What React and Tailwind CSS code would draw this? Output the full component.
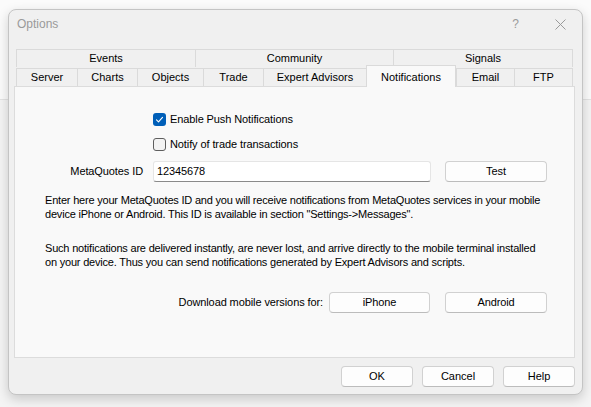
import React from 'react';

const font = { fontFamily: '"Liberation Sans", Arial, sans-serif' };

const Button = ({ children, className = '' }) => (
  <div
    className={`flex items-center justify-center h-[21px] rounded-[4px] border border-[#d1d1d1] border-b-[#bcbcbc] bg-[#fdfdfd] text-[11px] text-black ${className}`}
  >
    {children}
  </div>
);

const Checkbox = ({ checked, label }) => (
  <div className="flex items-center gap-[4px] h-[13px]">
    {checked ? (
      <div className="w-[13px] h-[13px] rounded-[3px] bg-[#005fb8] flex items-center justify-center">
        <svg width="9" height="9" viewBox="0 0 9 9" fill="none">
          <path d="M1.5 4.8 L3.5 6.8 L7.5 2.3" stroke="white" strokeWidth="1.1" strokeLinecap="round" strokeLinejoin="round" />
        </svg>
      </div>
    ) : (
      <div className="w-[13px] h-[13px] rounded-[3px] border border-[#5e5e5e] bg-[#f3f3f3]" />
    )}
    <span className="text-[11px] text-black">{label}</span>
  </div>
);

const topTabs = [
  { label: 'Events', w: 'w-[179px]' },
  { label: 'Community', w: 'w-[198px]' },
  { label: 'Signals', w: 'w-[180px]' },
];

const tabs = [
  { label: 'Server', w: 'w-[61px]' },
  { label: 'Charts', w: 'w-[60px]' },
  { label: 'Objects', w: 'w-[66px]' },
  { label: 'Trade', w: 'w-[60px]' },
  { label: 'Expert Advisors', w: 'w-[103px]' },
  { label: 'Notifications', w: 'w-[90px]', active: true },
  { label: 'Email', w: 'w-[58px]' },
  { label: 'FTP', w: 'w-[59px]' },
];

export default function App() {
  return (
    <div className="relative w-[591px] h-[407px] bg-white overflow-hidden" style={font}>
      {/* window behind */}
      <div className="h-[100px] border-b border-[#e3e3e3] bg-[#fbfbfb]" />
      <div className="h-[307px] bg-[#f4f4f4]" />

      {/* dialog */}
      <div className="absolute left-[8px] top-[9px] w-[575px] h-[386px] rounded-[8px] border border-[#c4c4c4] bg-[#f0f0f0] shadow-[0_4px_12px_rgba(0,0,0,0.18)] flex flex-col">
        <div className="h-[39px] flex items-start justify-between pl-[8px] pr-[16px] pt-[6px]">
          <span className="text-[12px] leading-[16px] text-[#9a9a9a]">Options</span>
          <div className="flex items-center gap-[36px] h-[16px]">
            <span className="text-[12px] leading-[16px] text-[#9a9a9a]">?</span>
            <svg width="11" height="11" viewBox="0 0 11 11">
              <path d="M0.5 0.5 L10.5 10.5 M10.5 0.5 L0.5 10.5" stroke="#9a9a9a" strokeWidth="1" />
            </svg>
          </div>
        </div>

        <div className="pl-[5px] pr-[7px]">
          <div className="flex ml-[2px]">
            {topTabs.map((t) => (
              <div
                key={t.label}
                className={`${t.w} h-[18px] flex items-center justify-center border border-r-0 last:border-r border-b-0 border-[#dadada] text-[11px] text-black`}
              >
                {t.label}
              </div>
            ))}
          </div>
          <div className="flex ml-[2px] items-end h-[19px] relative z-10">
            {tabs.map((t) =>
              t.active ? (
                <div
                  key={t.label}
                  className={`${t.w} h-[22px] -mt-[3px] mb-[-1px] flex items-start pt-[3px] justify-center border border-b-0 border-[#dadada] bg-[#f9f9f9] text-[11px] text-black`}
                >
                  {t.label}
                </div>
              ) : (
                <div
                  key={t.label}
                  className={`${t.w} h-[18px] flex items-center justify-center border-t border-l last:border-r border-[#dadada] text-[11px] text-black`}
                >
                  {t.label}
                </div>
              )
            )}
          </div>

          <div className="h-[272px] bg-[#f9f9f9] border border-[#dcdcdc] text-[11px] text-black tracking-[-0.1px]">
            <div className="pl-[138px] pt-[26px] flex flex-col gap-[12px]">
              <Checkbox checked label="Enable Push Notifications" />
              <Checkbox label="Notify of trade transactions" />
            </div>

            <div className="flex items-center mt-[10px]">
              <div className="w-[130px] text-right pr-[2px]">MetaQuotes ID</div>
              <div className="ml-[8px] w-[278px] h-[21px] bg-white border border-[#e5e5e5] border-b-[#8a8a8a] rounded-[3px] flex items-center pl-[3px]">
                12345678
              </div>
              <Button className="ml-[14px] w-[102px]">Test</Button>
            </div>

            <div className="pl-[30px] mt-[12px] leading-[13.5px] whitespace-nowrap tracking-[-0.2px]">
              <div>Enter here your MetaQuotes ID and you will receive notifications from MetaQuotes services in your mobile</div>
              <div>device iPhone or Android. This ID is available in section "Settings-&gt;Messages".</div>
            </div>

            <div className="pl-[30px] mt-[21px] leading-[13.5px] whitespace-nowrap tracking-[-0.2px]">
              <div>Such notifications are delivered instantly, are never lost, and arrive directly to the mobile terminal installed</div>
              <div>on your device. Thus you can send notifications generated by Expert Advisors and scripts.</div>
            </div>

            <div className="flex items-center justify-end pr-[27px] mt-[23px]">
              <span className="mr-[6px]">Download mobile versions for:</span>
              <Button className="w-[101px]">iPhone</Button>
              <Button className="ml-[15px] w-[102px]">Android</Button>
            </div>
          </div>
        </div>

        <div className="flex justify-end gap-[9px] pr-[7px] mt-[8px]">
          <Button className="w-[72px]">OK</Button>
          <Button className="w-[72px]">Cancel</Button>
          <Button className="w-[72px]">Help</Button>
        </div>
      </div>
    </div>
  );
}
